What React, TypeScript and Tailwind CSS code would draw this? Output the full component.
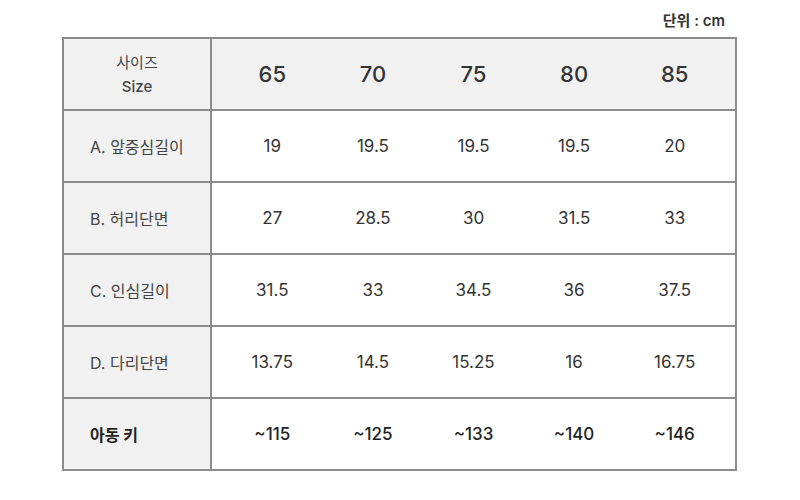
import React from "react";

const sizes = ["65", "70", "75", "80", "85"];
const rows: { label: string; values: string[]; bold?: boolean }[] = [
  { label: "A. 앞중심길이", values: ["19", "19.5", "19.5", "19.5", "20"] },
  { label: "B. 허리단면", values: ["27", "28.5", "30", "31.5", "33"] },
  { label: "C. 인심길이", values: ["31.5", "33", "34.5", "36", "37.5"] },
  { label: "D. 다리단면", values: ["13.75", "14.5", "15.25", "16", "16.75"] },
  { label: "아동 키", values: ["~115", "~125", "~133", "~140", "~146"], bold: true },
];

const font = {
  fontFamily: "Inter, 'Noto Sans CJK KR', 'Noto Sans', sans-serif",
};

export default function App() {
  return (
    <div className="w-[800px] h-[500px] bg-white text-[#333]" style={font}>
      <div className="h-[37px] flex items-start justify-end pr-[75px] pt-[10px]">
        <span className="text-[15px] font-semibold leading-[22px] text-[#333]">단위 : cm</span>
      </div>
      <div className="ml-[62px] w-[675px] border-2 border-[#8c8c8c] flex flex-col">
        <div className="flex h-[70px]">
          <div className="w-[148px] border-r-2 border-[#8c8c8c] bg-[#f1f1f1] flex flex-col items-center justify-center text-[15px] leading-[24px] text-[#444] pt-[2px]">
            <span>사이즈</span>
            <span className="font-medium">Size</span>
          </div>
          <div className="flex-1 bg-[#f1f1f1] grid grid-cols-5 px-[10px] items-center">
            {sizes.map((s) => (
              <div key={s} className="text-center text-[22px] font-medium text-[#333]">
                {s}
              </div>
            ))}
          </div>
        </div>
        {rows.map((r) => (
          <div key={r.label} className="flex h-[72px] border-t-2 border-[#8c8c8c]">
            <div
              className={`w-[148px] border-r-2 border-[#8c8c8c] bg-[#f1f1f1] flex items-center pl-[26px] pt-[2px] text-[16px] ${
                r.bold ? "font-bold text-[#222]" : "text-[#444]"
              }`}
            >
              {r.label}
            </div>
            <div className="flex-1 bg-white grid grid-cols-5 px-[10px] pt-[2px] items-center">
              {r.values.map((v, i) => (
                <div
                  key={i}
                  className={`text-center text-[17px] ${r.bold ? "font-medium text-[#222]" : "text-[#333]"}`}
                >
                  {v}
                </div>
              ))}
            </div>
          </div>
        ))}
      </div>
    </div>
  );
}
